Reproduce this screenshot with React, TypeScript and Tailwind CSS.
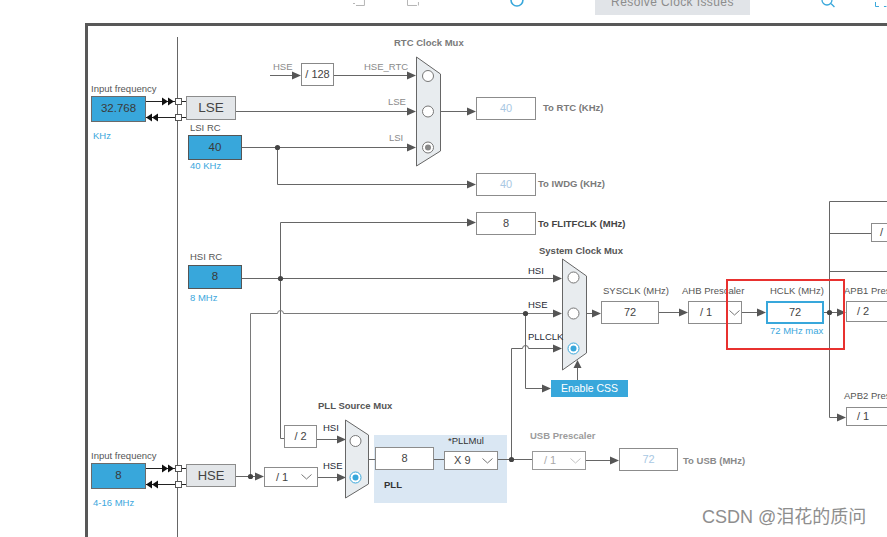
import React from 'react'

const WIRE = '#666'
const BLUE = '#38a7db'

function ArrowR({ x, y }: { x: number; y: number }) {
  return <polygon points={`${x - 9},${y - 4} ${x},${y} ${x - 9},${y + 4}`} fill="#555" />
}

function Dot({ x, y }: { x: number; y: number }) {
  return <circle cx={x} cy={y} r={2.6} fill="#444" />
}

function Radio({ x, y, on, blue }: { x: number; y: number; on?: boolean; blue?: boolean }) {
  const c = blue ? BLUE : '#777'
  return (
    <g>
      <circle cx={x} cy={y} r={5.5} fill="#fff" stroke={on ? c : '#777'} strokeWidth={1} />
      {on && <circle cx={x} cy={y} r={3} fill={blue ? BLUE : '#888'} />}
    </g>
  )
}

function DoubleIn({ y }: { y: number }) {
  // the two wires between an input box and the LSE / HSE block
  const a = y
  const b = y + 16
  return (
    <g>
      <path d={`M146 ${a} H175 M146 ${b} H175 M181 ${a} H186 M181 ${b} H186`} stroke="#222" />
      <polygon points={`162,${a - 4} 168,${a} 162,${a + 4}`} fill="#111" />
      <polygon points={`168,${a - 4} 174,${a} 168,${a + 4}`} fill="#111" />
      <polygon points={`152,${b - 4} 146,${b} 152,${b + 4}`} fill="#111" />
      <polygon points={`158,${b - 4} 152,${b} 158,${b + 4}`} fill="#111" />
      <rect x={175.5} y={a - 3} width={6} height={6} fill="#fff" stroke="#555" />
      <rect x={175.5} y={b - 3} width={6} height={6} fill="#fff" stroke="#555" />
    </g>
  )
}

function Wires() {
  return (
    <svg className="absolute inset-0" width={799} height={511} viewBox="88 26 799 511" fill="none">
      <g stroke={WIRE} strokeWidth={1}>
        <path d="M177.5 37 V537" />
        {/* LSE / LSI */}
        <path d="M236 111.5 H410" />
        <path d="M242 147.5 H410" />
        <path d="M277.5 147.5 V184.5 H470" />
        <path d="M270 75.5 H295" />
        <path d="M334 75.5 H410" />
        <path d="M440 111.5 H470" />
        {/* HSI */}
        <path d="M242 278.5 H556" />
        <path d="M280.5 222.5 V438.5 H284" />
        <path d="M280.5 222.5 H470" />
        {/* HSE */}
        <path d="M250.5 476.5 V313.5 H277.5 A3 3 0 0 1 283.5 313.5 H556" stroke="#7a7a7a" />
        <path d="M525.5 313.5 V388.5 H545" />
        <path d="M511.5 459.5 V348.5 H522.5 A3 3 0 0 1 528.5 348.5 H556" />
        <path d="M577.5 368 V380" />
        {/* system clock chain */}
        <path d="M586 313.5 H595" />
        <path d="M659 312.5 H682" />
        <path d="M742 312.5 H760" />
        <path d="M824 312.5 H840" />
        <path d="M829.5 201.5 V417.5 H840" />
        <path d="M829.5 201.5 H887 M829.5 233.5 H871 M829.5 271.5 H887" />
        {/* HSE / PLL */}
        <path d="M236 476.5 H258" />
        <path d="M318 477.5 H340" />
        <path d="M317 439.5 H340" />
        <path d="M368 459.5 H375 M434 459.5 H444 M498 459.5 H532" />
        <path d="M586 460.5 H613" />
      </g>

      <DoubleIn y={101.5} />
      <DoubleIn y={468.5} />

      <ArrowR x={416} y={111.5} />
      <ArrowR x={416} y={147.5} />
      <ArrowR x={476} y={184.5} />
      <ArrowR x={301} y={75.5} />
      <ArrowR x={416} y={75.5} />
      <ArrowR x={476} y={111.5} />
      <ArrowR x={562} y={278.5} />
      <ArrowR x={476} y={222.5} />
      <ArrowR x={562} y={313.5} />
      <ArrowR x={551} y={388.5} />
      <ArrowR x={562} y={348.5} />
      <ArrowR x={601} y={313.5} />
      <ArrowR x={688} y={312.5} />
      <ArrowR x={766} y={312.5} />
      <ArrowR x={846} y={312.5} />
      <ArrowR x={846} y={417.5} />
      <ArrowR x={264} y={476.5} />
      <ArrowR x={346} y={477.5} />
      <ArrowR x={346} y={439.5} />
      <ArrowR x={619} y={460.5} />
      <polygon points="573.5,368 577.5,360 581.5,368" fill="#555" />

      <Dot x={277.5} y={147.5} />
      <Dot x={280.5} y={278.5} />
      <Dot x={525.5} y={313.5} />
      <Dot x={829.5} y={312.5} />
      <Dot x={250.5} y={476.5} />
      <Dot x={511.5} y={459.5} />

      {/* muxes */}
      <polygon points="416.5,57 440.5,74 440.5,151 416.5,166" fill="#e8ecef" stroke="#666" />
      <Radio x={428} y={76} />
      <Radio x={428} y={111.5} />
      <Radio x={428} y={147.5} on />

      <polygon points="562.5,259 586.5,276 586.5,353 562.5,370" fill="#e8ecef" stroke="#666" />
      <Radio x={573.5} y={277.5} />
      <Radio x={573.5} y={313.5} />
      <Radio x={573.5} y={348.5} on blue />

      <polygon points="345.5,420 368.5,435 368.5,484 345.5,498" fill="#e8ecef" stroke="#666" />
      <Radio x={355.5} y={441} />
      <Radio x={355.5} y={477.5} on blue />
    </svg>
  )
}

function Chevron({ light }: { light?: boolean }) {
  return (
    <svg width="11" height="6" viewBox="0 0 11 6" fill="none">
      <path d="M0.5 0.5 L5.5 5 L10.5 0.5" stroke={light ? '#c4c4c4' : '#777'} />
    </svg>
  )
}

export default function App() {
  return (
    <div className="w-[887px] h-[537px] overflow-hidden bg-white font-['Liberation_Sans',Arial,sans-serif]">
      {/* toolbar, cut at the top of the shot */}
      <div className="flex h-[23px] items-start overflow-hidden">
        <svg className="ml-[352px]" width="14" height="8" viewBox="0 0 14 8" fill="none">
          <path d="M12.5 0 V5.5 H4 M1 3.5 H3" stroke="#b5b5b5" />
        </svg>
        <svg className="ml-[40px]" width="14" height="8" viewBox="0 0 14 8" fill="none">
          <path d="M1.5 0 V5.5 H11 M12.5 2 V5.5" stroke="#b5b5b5" />
        </svg>
        <svg className="ml-[90px]" width="14" height="9" viewBox="0 0 14 9" fill="none">
          <path d="M1 0 A6 6 0 0 0 13 0" stroke={BLUE} strokeWidth="1.6" />
        </svg>
        <div className="ml-[71px] w-[156px] h-[15px] bg-[#e1e4e8] overflow-hidden flex justify-center">
          <span className="block leading-none -mt-[4px] text-[12px] tracking-[0.4px] text-[#8c8c8c]">Resolve Clock Issues</span>
        </div>
        <svg className="ml-[71px]" width="15" height="8" viewBox="0 0 15 8" fill="none">
          <path d="M1 0 A5 5 0 0 0 11 0 M9.5 3 L13.5 7" stroke={BLUE} strokeWidth="1.3" />
        </svg>
        <svg className="ml-[38px]" width="13" height="8" viewBox="0 0 13 8" fill="none">
          <path d="M1.5 2 V6.5 H5 M10 6.5 H12.5" stroke={BLUE} />
        </svg>
      </div>

      {/* clock tree frame */}
      <div className="ml-[85px] w-[802px] h-[514px] border-l-[3px] border-t-[3px] border-[#585858] relative overflow-hidden">
        <div className="absolute left-[286px] top-[409px] w-[133px] h-[68px] bg-[#dae7f3]" />

        <Wires />

        {/* labels */}
        <div className="text-[9.5px] leading-none text-[#555]">
          <span className="absolute left-[3px] top-[58px] whitespace-nowrap">Input frequency</span>
          <span className="absolute left-[5px] top-[105px] text-[#3ba7dd]">KHz</span>
          <span className="absolute left-[102px] top-[97px] whitespace-nowrap">LSI RC</span>
          <span className="absolute left-[102px] top-[135px] whitespace-nowrap text-[#3ba7dd]">40 KHz</span>
          <span className="absolute left-[306px] top-[12px] whitespace-nowrap font-bold text-[#7a7a7a]">RTC Clock Mux</span>
          <span className="absolute left-[185px] top-[36px] text-[#8a8a8a]">HSE</span>
          <span className="absolute left-[276px] top-[36px] text-[#8a8a8a]">HSE_RTC</span>
          <span className="absolute left-[300px] top-[71px] text-[#8a8a8a]">LSE</span>
          <span className="absolute left-[301px] top-[107px] text-[#8a8a8a]">LSI</span>
          <span className="absolute left-[455px] top-[77px] whitespace-nowrap font-bold text-[#7a7a7a]">To RTC (KHz)</span>
          <span className="absolute left-[450px] top-[153px] whitespace-nowrap font-bold text-[#7a7a7a]">To IWDG (KHz)</span>
          <span className="absolute left-[450px] top-[193px] whitespace-nowrap font-bold text-[#444]">To FLITFCLK (MHz)</span>
          <span className="absolute left-[102px] top-[226px] whitespace-nowrap">HSI RC</span>
          <span className="absolute left-[102px] top-[267px] whitespace-nowrap text-[#3ba7dd]">8 MHz</span>
          <span className="absolute left-[451px] top-[220px] whitespace-nowrap font-bold">System Clock Mux</span>
          <span className="absolute left-[440px] top-[240px] text-[#1f2a36]">HSI</span>
          <span className="absolute left-[440px] top-[274px] text-[#1f2a36]">HSE</span>
          <span className="absolute left-[440px] top-[306px] text-[#1f2a36]">PLLCLK</span>
          <span className="absolute left-[515px] top-[260px] whitespace-nowrap">SYSCLK (MHz)</span>
          <span className="absolute left-[594px] top-[260px] whitespace-nowrap">AHB Prescaler</span>
          <span className="absolute left-[682px] top-[260px] whitespace-nowrap">HCLK (MHz)</span>
          <span className="absolute left-[682px] top-[300px] whitespace-nowrap text-[#3ba7dd]">72 MHz max</span>
          <span className="absolute left-[756px] top-[260px] whitespace-nowrap">APB1 Prescaler</span>
          <span className="absolute left-[756px] top-[365px] whitespace-nowrap">APB2 Prescaler</span>
          <span className="absolute left-[3px] top-[425px] whitespace-nowrap">Input frequency</span>
          <span className="absolute left-[5px] top-[472px] whitespace-nowrap text-[#3ba7dd]">4-16 MHz</span>
          <span className="absolute left-[230px] top-[375px] whitespace-nowrap font-bold">PLL Source Mux</span>
          <span className="absolute left-[235px] top-[397px] text-[#1f2a36]">HSI</span>
          <span className="absolute left-[235px] top-[435px] text-[#1f2a36]">HSE</span>
          <span className="absolute left-[360px] top-[410px] text-[#333]">*PLLMul</span>
          <span className="absolute left-[296px] top-[454px] font-semibold text-[#333]">PLL</span>
          <span className="absolute left-[442px] top-[405px] whitespace-nowrap font-semibold text-[#9c9c9c]">USB Prescaler</span>
          <span className="absolute left-[595px] top-[430px] whitespace-nowrap font-bold text-[#8a8a8a]">To USB (MHz)</span>
        </div>

        {/* boxes */}
        <div className="text-[11px] text-[#444]">
          <div className="absolute left-[3px] top-[70px] w-[55px] h-[26px] bg-[#38a7db] border border-[#6a6a6a] flex items-center justify-center text-[11.5px] text-[#3a3a3a]">32.768</div>
          <div className="absolute left-[98px] top-[70px] w-[50px] h-[24px] bg-[#e3e6e9] border border-[#8c8c8c] flex items-center justify-center text-[13.5px]">LSE</div>
          <div className="absolute left-[100px] top-[109px] w-[54px] h-[25px] bg-[#38a7db] border border-[#555] flex items-center justify-center text-[11.5px] text-[#3a3a3a]">40</div>
          <div className="absolute left-[213px] top-[37px] w-[33px] h-[23px] bg-white border border-[#888] flex items-center justify-center">/ 128</div>
          <div className="absolute left-[388px] top-[71px] w-[60px] h-[23px] bg-white border border-[#8c8c8c] flex items-center justify-center text-[#a9c8e3]">40</div>
          <div className="absolute left-[388px] top-[147px] w-[60px] h-[23px] bg-white border border-[#8c8c8c] flex items-center justify-center text-[#a9c8e3]">40</div>
          <div className="absolute left-[388px] top-[186px] w-[60px] h-[23px] bg-white border border-[#8c8c8c] flex items-center justify-center">8</div>
          <div className="absolute left-[100px] top-[239px] w-[54px] h-[24px] bg-[#38a7db] border border-[#555] flex items-center justify-center text-[11.5px] text-[#3a3a3a]">8</div>
          <div className="absolute left-[463px] top-[354px] w-[77px] h-[17px] bg-[#38a7db] flex items-center justify-center text-[10.5px] text-white">Enable CSS</div>
          <div className="absolute left-[513px] top-[275px] w-[58px] h-[23px] bg-white border border-[#8c8c8c] flex items-center justify-center">72</div>
          <div className="absolute left-[600px] top-[275px] w-[54px] h-[23px] bg-white border border-[#8c8c8c] flex items-center">
            <span className="pl-[11px] flex-1">/ 1</span>
            <div className="w-[15px] h-full border-l border-[#8c8c8c] flex items-center justify-center">
              <Chevron />
            </div>
          </div>
          <div className="absolute left-[678px] top-[275px] w-[58px] h-[23px] bg-white border-2 border-[#38a7db] flex items-center justify-center">72</div>
          <div className="absolute left-[638px] top-[253px] w-[119px] h-[71px] border-2 border-[#e8312f]" />
          <div className="absolute left-[758px] top-[275px] w-[60px] h-[21px] bg-white border border-[#8c8c8c] flex items-center pl-[10px]">/ 2</div>
          <div className="absolute left-[758px] top-[381px] w-[60px] h-[19px] bg-white border border-[#8c8c8c] flex items-center pl-[10px]">/ 1</div>
          <div className="absolute left-[783px] top-[197px] w-[40px] h-[19px] bg-white border border-[#8c8c8c] flex items-center pl-[8px]">/</div>

          <div className="absolute left-[3px] top-[437px] w-[55px] h-[26px] bg-[#38a7db] border border-[#6a6a6a] flex items-center justify-center text-[11.5px] text-[#3a3a3a]">8</div>
          <div className="absolute left-[98px] top-[438px] w-[50px] h-[23px] bg-[#e3e6e9] border border-[#8c8c8c] flex items-center justify-center text-[13px]">HSE</div>
          <div className="absolute left-[176px] top-[441px] w-[54px] h-[20px] bg-white border border-[#8c8c8c] flex items-center justify-between pl-[11px] pr-[5px]">
            <span>/ 1</span>
            <Chevron />
          </div>
          <div className="absolute left-[196px] top-[399px] w-[33px] h-[23px] bg-white border border-[#8c8c8c] flex items-center justify-center">/ 2</div>
          <div className="absolute left-[287px] top-[421px] w-[59px] h-[23px] bg-white border border-[#8c8c8c] flex items-center justify-center">8</div>
          <div className="absolute left-[356px] top-[425px] w-[54px] h-[19px] bg-white border border-[#8c8c8c] flex items-center justify-between pl-[9px] pr-[4px]">
            <span>X 9</span>
            <Chevron />
          </div>
          <div className="absolute left-[444px] top-[425px] w-[54px] h-[19px] bg-white border border-[#9a9a9a] flex items-center justify-between pl-[11px] pr-[4px] text-[#a8a8a8]">
            <span>/ 1</span>
            <Chevron light />
          </div>
          <div className="absolute left-[531px] top-[422px] w-[59px] h-[23px] bg-white border border-[#8c8c8c] flex items-center justify-center text-[#a9c8e3]">72</div>
        </div>

        <span className="absolute left-[614px] top-[482px] whitespace-nowrap leading-none text-[18px] text-[#8e8e8e] font-['Liberation_Sans','Noto_Sans_CJK_SC',sans-serif]">
          CSDN @泪花的质问
        </span>
      </div>
    </div>
  )
}
